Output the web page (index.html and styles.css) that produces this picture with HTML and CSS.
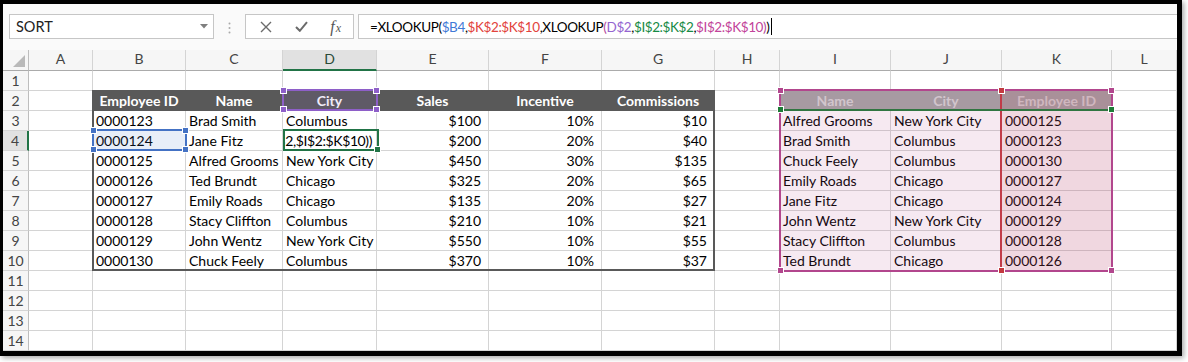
FILE: index.html
```html
<!DOCTYPE html>
<html>
<head>
<meta charset="utf-8">
<link rel="stylesheet" href="styles.css">
</head>
<body>
<div class="frame">
  <div class="toolbar">
    <div class="namebox"><span>SORT</span><svg width="8" height="5" viewBox="0 0 8 5"><path d="M0 0h8L4 4.5z" fill="#7f7f7f"/></svg></div>
    <div class="dots"><svg width="3" height="12" viewBox="0 0 3 12"><circle cx="1.5" cy="1.5" r="1" fill="#a9a9a9"/><circle cx="1.5" cy="6" r="1" fill="#a9a9a9"/><circle cx="1.5" cy="10.5" r="1" fill="#a9a9a9"/></svg></div>
    <div class="btns">
      <span class="btn"><svg width="12" height="12" viewBox="0 0 12 12"><path d="M1 1L11 11M11 1L1 11" stroke="#6b6b6b" stroke-width="1.4" fill="none"/></svg></span>
      <span class="btn"><svg width="13" height="11" viewBox="0 0 13 11"><path d="M1 6l3.8 3.8L12 1.2" stroke="#6b6b6b" stroke-width="2" fill="none"/></svg></span>
      <span class="btn fxi"><i>f</i><i class="x">x</i></span>
    </div>
    <div class="formula"><span>=XLOOKUP(</span><span class="cb">$B4</span><span>,</span><span class="cr">$K$2:$K$10</span><span>,XLOOKUP</span><span class="cp2">(</span><span class="cp">D$2</span><span>,</span><span class="cg">$I$2:$K$2</span><span>,</span><span class="cm">$I$2:$K$10</span><span class="cp2">)</span><span>)</span><span class="caret"></span></div>
  </div>
  <div class="sheet">
    <div class="r ch"><span class="corner"><svg width="12" height="12" viewBox="0 0 12 12"><path d="M12 0V12H0z" fill="#b9b9b9"/></svg></span><span>A</span><span>B</span><span>C</span><span class="on">D</span><span>E</span><span>F</span><span>G</span><span>H</span><span>I</span><span>J</span><span>K</span><span>L</span></div>
    <div class="r"><span>1</span><span></span><span></span><span></span><span></span><span></span><span></span><span></span><span></span><span></span><span></span><span></span><span></span></div>
    <div class="r"><span>2</span><span></span><span class="th">Employee ID</span><span class="th">Name</span><span class="th">City</span><span class="th">Sales</span><span class="th">Incentive</span><span class="th">Commissions</span><span></span><span class="gh">Name</span><span class="gh">City</span><span class="gh">Employee ID</span><span></span></div>
    <div class="r"><span>3</span><span></span><span>0000123</span><span>Brad Smith</span><span>Columbus</span><span class="n">$100</span><span class="n">10%</span><span class="n">$10</span><span></span><span>Alfred Grooms</span><span>New York City</span><span>0000125</span><span></span></div>
    <div class="r"><span class="on">4</span><span></span><span>0000124</span><span>Jane Fitz</span><span class="edit"><b>K$2,$I$2:$K$10))</b></span><span class="n">$200</span><span class="n">20%</span><span class="n">$40</span><span></span><span>Brad Smith</span><span>Columbus</span><span>0000123</span><span></span></div>
    <div class="r"><span>5</span><span></span><span>0000125</span><span>Alfred Grooms</span><span>New York City</span><span class="n">$450</span><span class="n">30%</span><span class="n">$135</span><span></span><span>Chuck Feely</span><span>Columbus</span><span>0000130</span><span></span></div>
    <div class="r"><span>6</span><span></span><span>0000126</span><span>Ted Brundt</span><span>Chicago</span><span class="n">$325</span><span class="n">20%</span><span class="n">$65</span><span></span><span>Emily Roads</span><span>Chicago</span><span>0000127</span><span></span></div>
    <div class="r"><span>7</span><span></span><span>0000127</span><span>Emily Roads</span><span>Chicago</span><span class="n">$135</span><span class="n">20%</span><span class="n">$27</span><span></span><span>Jane Fitz</span><span>Chicago</span><span>0000124</span><span></span></div>
    <div class="r"><span>8</span><span></span><span>0000128</span><span>Stacy Cliffton</span><span>Columbus</span><span class="n">$210</span><span class="n">10%</span><span class="n">$21</span><span></span><span>John Wentz</span><span>New York City</span><span>0000129</span><span></span></div>
    <div class="r"><span>9</span><span></span><span>0000129</span><span>John Wentz</span><span>New York City</span><span class="n">$550</span><span class="n">10%</span><span class="n">$55</span><span></span><span>Stacy Cliffton</span><span>Columbus</span><span>0000128</span><span></span></div>
    <div class="r"><span>10</span><span></span><span>0000130</span><span>Chuck Feely</span><span>Columbus</span><span class="n">$370</span><span class="n">10%</span><span class="n">$37</span><span></span><span>Ted Brundt</span><span>Chicago</span><span>0000126</span><span></span></div>
    <div class="r"><span>11</span><span></span><span></span><span></span><span></span><span></span><span></span><span></span><span></span><span></span><span></span><span></span><span></span></div>
    <div class="r"><span>12</span><span></span><span></span><span></span><span></span><span></span><span></span><span></span><span></span><span></span><span></span><span></span><span></span></div>
    <div class="r"><span>13</span><span></span><span></span><span></span><span></span><span></span><span></span><span></span><span></span><span></span><span></span><span></span><span></span></div>
    <div class="r"><span>14</span><span></span><span></span><span></span><span></span><span></span><span></span><span></span><span></span><span></span><span></span><span></span><span></span></div>

    <div class="ov tbl"></div>
    <div class="ov sel-d2"><i class="hd tl"></i><i class="hd tr"></i><i class="hd bl"></i><i class="hd br"></i></div>
    <div class="ov sel-b4"><i class="hd tl"></i><i class="hd tr"></i><i class="hd bl"></i><i class="hd br"></i></div>
    <div class="ov act"><i class="hd br"></i></div>
    <div class="ov rng-red"><i class="hd tl"></i><i class="hd bl"></i></div>
    <div class="ov rng-grn"><i class="hd bl"></i><i class="hd br"></i></div>
    <div class="ov rng-mag"><i class="hd tl"></i><i class="hd tr"></i><i class="hd bl"></i><i class="hd br"></i></div>
  </div>
</div>
</body>
</html>
```
FILE: styles.css
```css
* { box-sizing: border-box; margin: 0; padding: 0; }
html, body { width: 1188px; height: 362px; overflow: hidden; background: #fff; }
body { font-family: Lato, "Liberation Sans", sans-serif; font-size: 14px; color: #000; }

.frame {
  width: 1182px; height: 356px;
  border-style: solid; border-color: #000;
  border-width: 4px 5px 5px 3px;
  box-shadow: 2px 2px 5px rgba(0,0,0,.35);
  display: flex; flex-direction: column; overflow: hidden;
  background: #fff;
}

/* formula bar */
.toolbar { height: 46px; flex: none; background: #fafafa; display: flex; align-items: flex-start; padding: 10px 0 0 6px; }
.namebox { width: 205px; height: 25px; flex: none; border: 1px solid #c6c6c6; background: #fff; display: flex; align-items: center; justify-content: space-between; padding: 0 5px 0 6px; font-size: 14.5px; color: #222; }
.dots { width: 31px; flex: none; display: flex; justify-content: center; padding-top: 8px; }
.dots svg { display: block; }
.btns { width: 109px; height: 25px; flex: none; border: 1px solid #c6c6c6; background: #fff; display: flex; align-items: center; padding-left: 3px; }
.btn { width: 35px; display: flex; justify-content: center; align-items: center; }
.btn svg { display: block; }
.fxi { font-family: "Liberation Serif", serif; font-size: 16px; color: #555; }
.fxi .x { font-size: 12px; position: relative; top: 2px; margin-left: 1px; }
.formula { flex: 1; height: 25px; margin-left: 4px; border: 1px solid #c6c6c6; border-right: none; background: #fff; display: flex; align-items: center; padding-left: 11px; font-size: 13.5px; letter-spacing: -0.4px; white-space: pre; }
.cb { color: #3f7ad6; }
.cr { color: #e2433c; }
.cp { color: #9465d0; }
.cp2 { color: #b44c9e; }
.cg { color: #178a45; }
.cm { color: #c2449a; }
.caret { display: inline-block; width: 1px; height: 17px; background: #000; margin-left: 2px; }

/* sheet */
.sheet { position: relative; flex: 1; }
.r { display: grid; grid-template-columns: 26px 64px 93px 97px 94px 112px 113px 113px 65px 111px 111px 110px 65px; height: 20px; }
.r > span { border-right: 1px solid #d4d4d4; border-bottom: 1px solid #d4d4d4; padding: 0 3px; line-height: 19px; white-space: nowrap; overflow: hidden; }
.r > span:first-child { background: #f6f6f6; text-align: center; color: #444; padding: 0; border-right-color: #bdbdbd; }
.r > span.on:first-child { background: #e1e1e1; border-right: 2px solid #217346; }

.ch { height: 21px; }
.ch > span { background: #f6f6f6; text-align: center; color: #444; line-height: 18px; border-bottom-color: #ababab; padding: 0; }
.ch > span.on { background: #e1e1e1; border-bottom: 2px solid #217346; color: #2a4a36; }
.ch > span.corner { display: flex; justify-content: flex-end; align-items: flex-end; padding: 0 3px 3px 0; }
.corner svg { display: block; }

.n { text-align: right; padding-right: 7px !important; }
.th { background: #595959; color: #fff; font-weight: 700; text-align: center; border-color: #595959 !important; }
.gh { background: #a5a5a5; color: #d6d6d6; font-weight: 700; text-align: center; border-color: #a5a5a5 !important; }
.edit { display: flex; justify-content: flex-end; padding-right: 4px !important; letter-spacing: -0.4px; }
.edit b { font-weight: 400; flex: none; }

/* overlays */
.ov { position: absolute; }
.tbl { left: 89px; top: 40px; width: 623px; height: 181px; border: 2px solid #595959; }
.sel-d2 { left: 279px; top: 39px; width: 96px; height: 22px; border: 2px solid #8e5fc8; color: #8e5fc8; background: rgba(142,95,200,.12); }
.sel-b4 { left: 89px; top: 79px; width: 95px; height: 22px; border: 2px solid #4472c4; color: #4472c4; background: rgba(68,114,196,.12); }
.act { left: 280px; top: 79px; width: 96px; height: 22px; border: 2px solid #217346; color: #217346; }
.rng-red { left: 997px; top: 39px; width: 113px; height: 183px; border: 2px solid #c3393f; color: #c3393f; background: rgba(195,58,64,.1); }
.rng-grn { left: 776px; top: 39px; width: 334px; height: 22px; border: 2px solid #1e7b37; color: #1e7b37; }
.rng-mag { left: 776px; top: 39px; width: 334px; height: 183px; border: 2px solid #b2468d; color: #b2468d; background: rgba(178,70,141,.12); }

.hd { position: absolute; width: 7px; height: 7px; background: currentColor; border: 1px solid #fff; z-index: 5; }
.tl { top: -4px; left: -4px; }
.tr { top: -4px; right: -4px; }
.bl { bottom: -4px; left: -4px; }
.br { bottom: -4px; right: -4px; }
```
